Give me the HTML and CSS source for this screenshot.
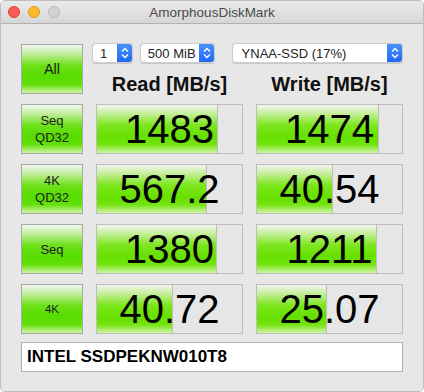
FILE: index.html
```html
<!DOCTYPE html>
<html lang="en">
<head>
  <meta charset="UTF-8" />
  <title>AmorphousDiskMark</title>
  <link rel="stylesheet" href="styles.css">
</head>
<body>
  <div class="window">
    <div class="titlebar">
      <div class="lights">
        <span class="light red"></span>
        <span class="light yellow"></span>
        <span class="light off"></span>
      </div>
      <div class="title">AmorphousDiskMark</div>
    </div>

    <div class="board">
      <div class="test all">All</div>
      <div class="head">
        <div class="selects">
          <div class="select count">
            <span>1</span>
            <i class="arrows"><svg width="16" height="20" viewBox="0 0 16 20"><path d="M5 8.5 L8 5.5 L11 8.5 M5 11.5 L8 14.5 L11 11.5" fill="none" stroke="#fff" stroke-width="1.4"/></svg></i>
          </div>
          <div class="select size">
            <span>500 MiB</span>
            <i class="arrows"><svg width="16" height="20" viewBox="0 0 16 20"><path d="M5 8.5 L8 5.5 L11 8.5 M5 11.5 L8 14.5 L11 11.5" fill="none" stroke="#fff" stroke-width="1.4"/></svg></i>
          </div>
          <div class="select drive">
            <span>YNAA-SSD (17%)</span>
            <i class="arrows"><svg width="16" height="20" viewBox="0 0 16 20"><path d="M5 8.5 L8 5.5 L11 8.5 M5 11.5 L8 14.5 L11 11.5" fill="none" stroke="#fff" stroke-width="1.4"/></svg></i>
          </div>
        </div>
        <div class="caption">Read [MB/s]</div>
        <div class="caption">Write [MB/s]</div>
      </div>

      <div class="test">Seq<br>QD32</div>
      <div class="bar"><div class="fill" style="width:121px"></div><span class="val">1483</span></div>
      <div class="bar"><div class="fill" style="width:122px"></div><span class="val">1474</span></div>

      <div class="test">4K<br>QD32</div>
      <div class="bar"><div class="fill" style="width:110px"></div><span class="val">567.2</span></div>
      <div class="bar"><div class="fill" style="width:76px"></div><span class="val">40.54</span></div>

      <div class="test">Seq</div>
      <div class="bar"><div class="fill" style="width:120px"></div><span class="val">1380</span></div>
      <div class="bar"><div class="fill" style="width:120px"></div><span class="val">1211</span></div>

      <div class="test small">4K</div>
      <div class="bar"><div class="fill" style="width:76px"></div><span class="val">40.72</span></div>
      <div class="bar"><div class="fill" style="width:70px"></div><span class="val">25.07</span></div>

      <div class="device">INTEL SSDPEKNW010T8</div>
    </div>
  </div>
</body>
</html>
```

FILE: styles.css
```css
body {
  margin: 0;
  background: #fff;
  font-family: 'Liberation Sans', Arial, sans-serif;
}

.window {
  width: 424px;
  height: 392px;
  box-sizing: border-box;
  border: 1px solid #bdbdbd;
  border-radius: 5px;
  background: #e7e7e7;
  overflow: hidden;
}

.titlebar {
  height: 22px;
  display: flex;
  align-items: center;
  justify-content: center;
  background: linear-gradient(to bottom, #ebebeb, #d6d6d6);
  border-bottom: 1px solid #b1b1b1;
  position: relative;
}

.lights {
  position: absolute;
  left: 7px;
  top: 5px;
  display: flex;
  gap: 8px;
}

.light {
  width: 12px;
  height: 12px;
  box-sizing: border-box;
  border-radius: 50%;
}

.red { background: #fd5c55; border: 1px solid #de3f38; }
.yellow { background: #fdb92c; border: 1px solid #dc9b1e; }
.off { background: #d2d2d2; border: 1px solid #bababa; }

.title {
  font-size: 13.5px;
  color: #4b4b4b;
}

.board {
  display: grid;
  grid-template-columns: 62px 147px 147px;
  grid-auto-rows: 50px;
  column-gap: 13px;
  row-gap: 10px;
  padding: 20px 0 0 20px;
}

.test {
  box-sizing: border-box;
  border: 1px solid #a9a9a9;
  background: linear-gradient(to bottom, #f1f7ee 0%, #c2ee9e 18%, #6ee11a 42%, #55dc00 66%, #63df0a 82%, #cdf5a0 100%);
  display: flex;
  align-items: center;
  justify-content: center;
  text-align: center;
  font-size: 13px;
  line-height: 17px;
  color: #1c1c1c;
}

.test.all { font-size: 14.5px; }
.test.small { font-size: 11.5px; }

.head {
  grid-column: 2 / 4;
  display: grid;
  grid-template-columns: 147px 147px;
  column-gap: 13px;
  align-content: start;
}

.selects {
  grid-column: 1 / 3;
  display: flex;
  margin: -1px 0 0 -4px;
}

.select {
  height: 20px;
  box-sizing: border-box;
  display: flex;
  align-items: center;
  justify-content: space-between;
  background: #fff;
  border: 1px solid #cfcfcf;
  border-radius: 4px;
  box-shadow: 0 0.5px 1px rgba(0,0,0,0.15);
  font-size: 13px;
  color: #222;
  overflow: hidden;
}

.select span { padding-left: 7px; }

.count { width: 41px; margin-right: 7px; }
.size { width: 75px; margin-right: 17px; }
.drive { width: 172px; }
.drive span { padding-left: 9px; }

.arrows {
  width: 16px;
  height: 20px;
  display: flex;
  background: linear-gradient(to bottom, #4d92fa, #1f67f4);
  border-radius: 0 4px 4px 0;
  margin-right: -1px;
}

.caption {
  margin-top: 10px;
  line-height: 22px;
  font-size: 20px;
  font-weight: bold;
  text-align: center;
  color: #111;
}

.bar {
  box-sizing: border-box;
  border: 1px solid #bdbdbd;
  background: #e6e6e6;
  display: grid;
}

.fill,
.val {
  grid-area: 1 / 1;
}

.fill {
  box-sizing: border-box;
  border-right: 1px solid #bdbdbd;
  background: linear-gradient(to bottom, #f2f5ef 0%, #c8ef9f 17%, #7de61e 42%, #66e000 66%, #72e30e 82%, #d0f5a6 100%);
}

.val {
  text-align: center;
  font-size: 40px;
  line-height: 48px;
  color: #000;
}

.device {
  grid-column: 1 / 4;
  height: 30px;
  margin-top: -2px;
  box-sizing: border-box;
  border: 1px solid #b3b3b3;
  background: #fff;
  padding-left: 5px;
  font-size: 17px;
  font-weight: bold;
  line-height: 28px;
  color: #000;
}
```
